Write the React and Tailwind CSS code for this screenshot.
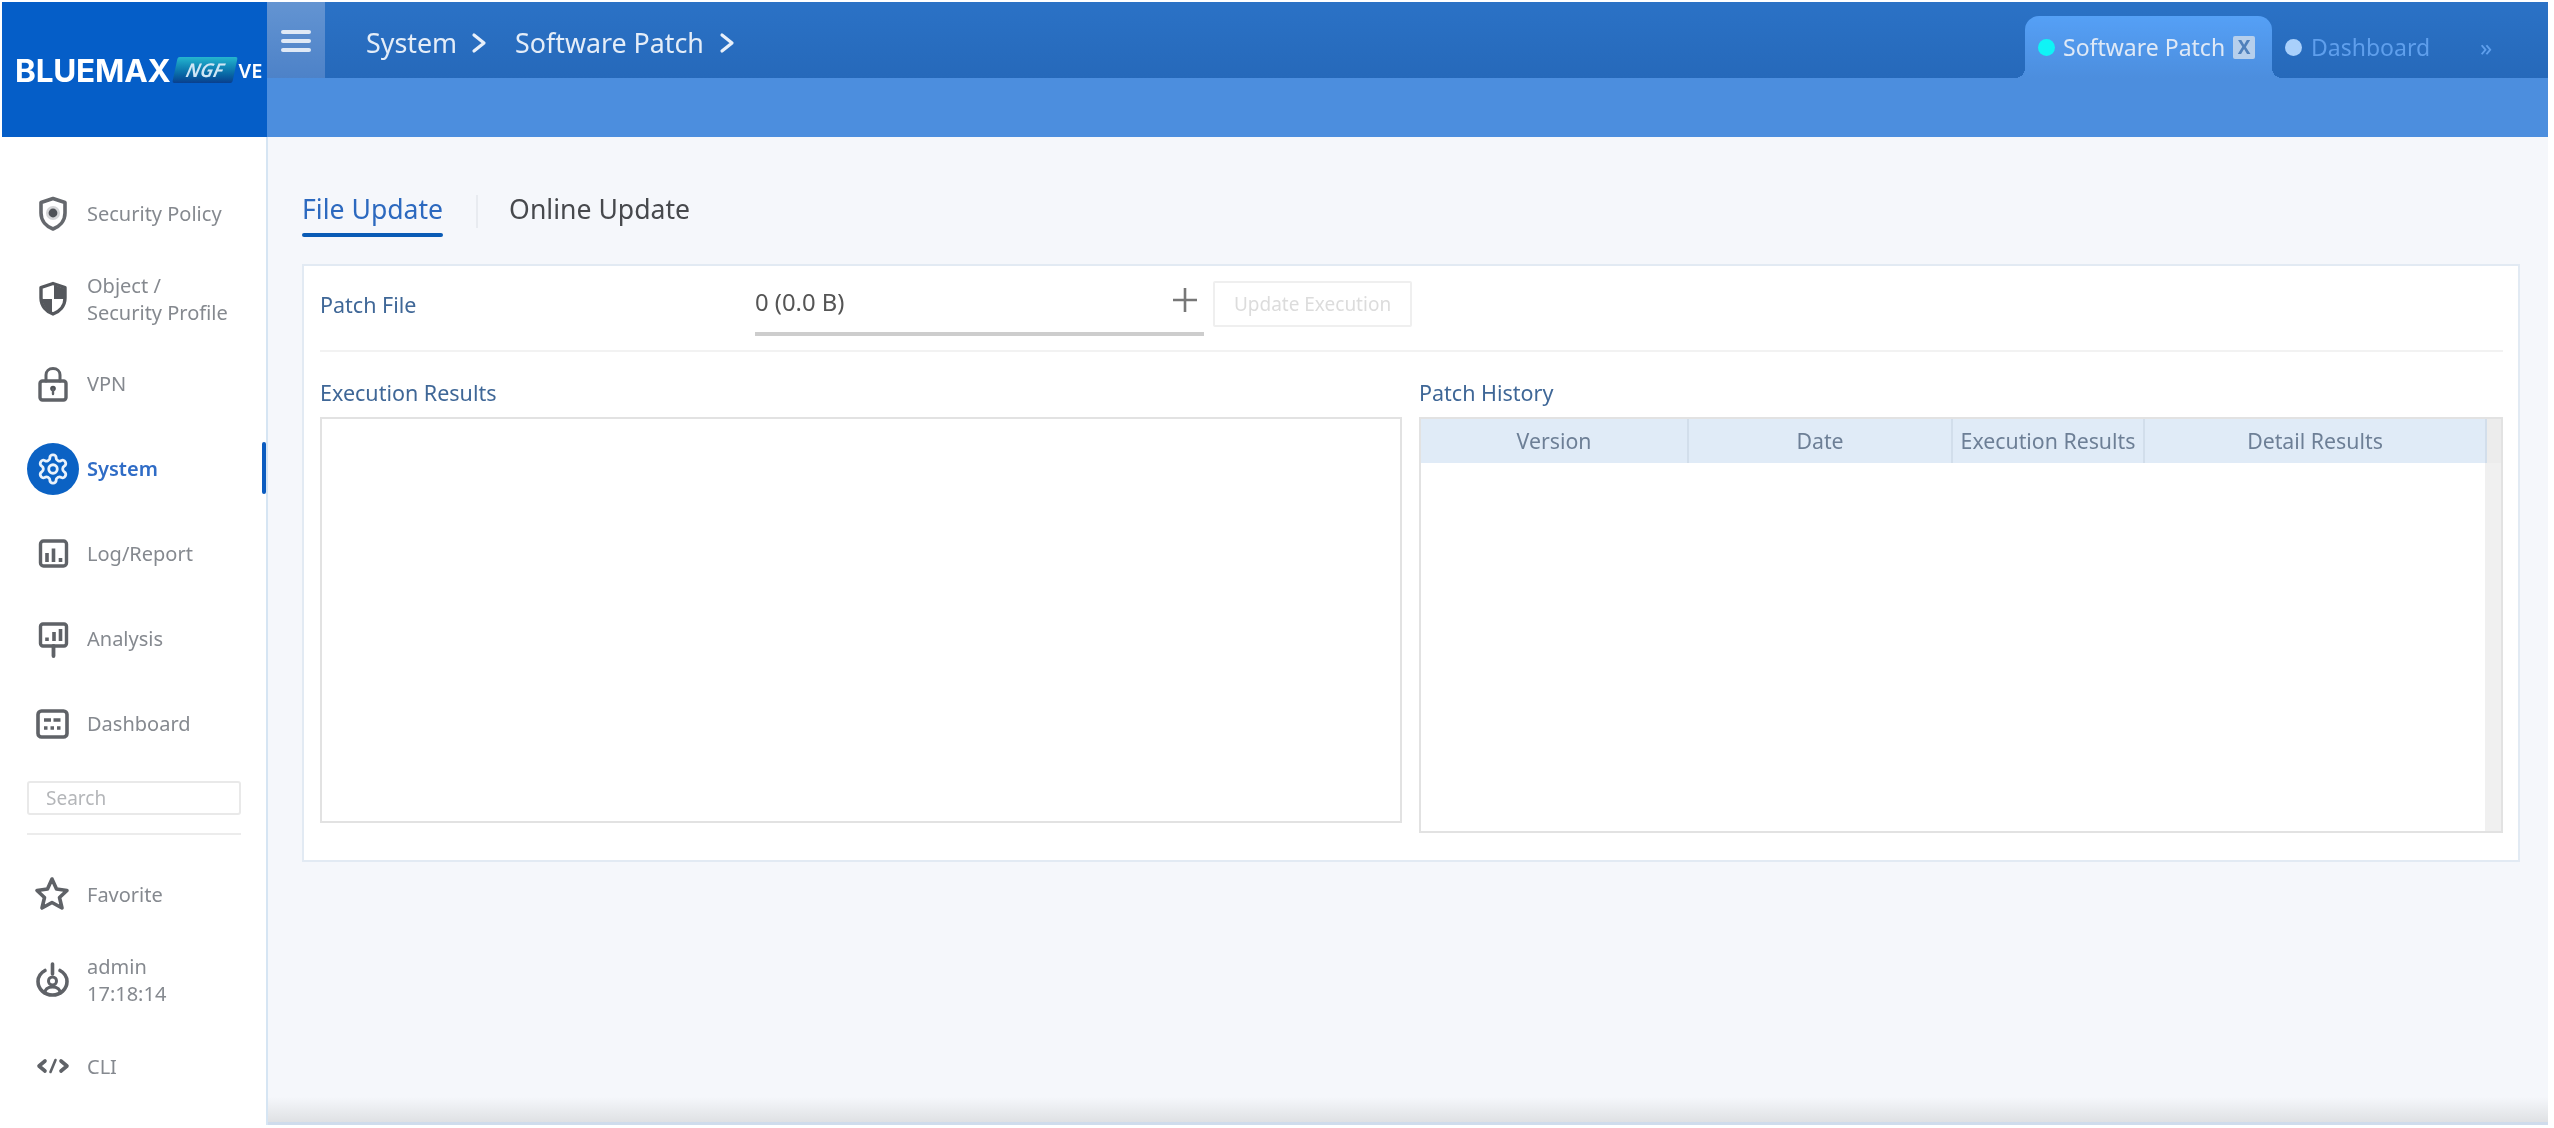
import React from "react";

const Ico = ({ children, w = 34, h = 36 }) => (
  <svg width={w} height={h} viewBox="0 0 34 36" fill="none" stroke="#5f6267" strokeWidth="3" strokeLinecap="round" strokeLinejoin="round" className="overflow-visible">
    {children}
  </svg>
);

const SecurityIcon = () => (
  <Ico>
    <path d="M17 2.5 L29 6.5 V17 C29 25 23.5 30.5 17 33 C10.5 30.5 5 25 5 17 V6.5 Z" strokeWidth="3.6" stroke="#65686d" />
    <circle cx="17" cy="17" r="7" fill="#d4d5d7" stroke="none" />
    <circle cx="17" cy="17" r="4.4" fill="#4f5257" stroke="none" />
  </Ico>
);
const ObjectIcon = () => (
  <Ico>
    <path d="M17 2.5 L29 6.5 V17 C29 25 23.5 30.5 17 33 C10.5 30.5 5 25 5 17 V6.5 Z" fill="#ffffff" strokeWidth="3.4" stroke="#55585d" />
    <path d="M18 4 L28 7.5 V18 H18 Z" fill="#55585d" stroke="none" />
    <path d="M16 18 H6 C7 25 11 29 16 32 Z" fill="#55585d" stroke="none" />
  </Ico>
);
const VpnIcon = () => (
  <Ico>
    <rect x="4" y="15" width="26" height="19" rx="2.5" strokeWidth="3.4" />
    <path d="M10 15 V9 C10 5 13 2.5 17 2.5 C21 2.5 24 5 24 9 V15" strokeWidth="3" />
    <circle cx="17" cy="22.5" r="2.8" fill="#4f5257" stroke="none" />
    <path d="M17 23 V28" strokeWidth="2.4" />
  </Ico>
);
const GearIcon = () => (
  <svg width="34" height="34" viewBox="0 0 24 24" fill="none" stroke="#eaf2fb" strokeWidth="2" strokeLinecap="round" strokeLinejoin="round">
    <path d="M12.22 2h-.44a2 2 0 0 0-2 2v.18a2 2 0 0 1-1 1.73l-.43.25a2 2 0 0 1-2 0l-.15-.08a2 2 0 0 0-2.73.73l-.22.38a2 2 0 0 0 .73 2.73l.15.1a2 2 0 0 1 1 1.72v.51a2 2 0 0 1-1 1.74l-.15.09a2 2 0 0 0-.73 2.73l.22.38a2 2 0 0 0 2.73.73l.15-.08a2 2 0 0 1 2 0l.43.25a2 2 0 0 1 1 1.73V20a2 2 0 0 0 2 2h.44a2 2 0 0 0 2-2v-.18a2 2 0 0 1 1-1.73l.43-.25a2 2 0 0 1 2 0l.15.08a2 2 0 0 0 2.73-.73l.22-.39a2 2 0 0 0-.73-2.73l-.15-.08a2 2 0 0 1-1-1.74v-.5a2 2 0 0 1 1-1.74l.15-.09a2 2 0 0 0 .73-2.73l-.22-.38a2 2 0 0 0-2.73-.73l-.15.08a2 2 0 0 1-2 0l-.43-.25a2 2 0 0 1-1-1.73V4a2 2 0 0 0-2-2z" />
    <circle cx="12" cy="12" r="3" />
  </svg>
);
const LogIcon = () => (
  <Ico>
    <rect x="4.5" y="5" width="26" height="25" rx="3" strokeWidth="3.4" />
    <path d="M11 26 V17 M17.5 26 V12.5 M24.5 26 V22" strokeWidth="3.6" strokeLinecap="butt" />
  </Ico>
);
const AnalysisIcon = () => (
  <Ico>
    <rect x="4.5" y="3" width="26" height="22" rx="2.5" strokeWidth="3.4" />
    <path d="M11 20 V16.5 M18 20 V11 M24.5 20 V8" strokeWidth="3.6" strokeLinecap="butt" />
    <path d="M17.5 25 V35" strokeWidth="3.8" />
  </Ico>
);
const DashIcon = () => (
  <Ico>
    <rect x="2" y="5" width="29" height="26" rx="3.5" strokeWidth="3.6" />
    <path d="M8 14 H25" strokeWidth="3.4" strokeLinecap="butt" strokeDasharray="7 2.5" />
    <path d="M8 22 H25" strokeWidth="3.4" strokeLinecap="butt" strokeDasharray="3.5 3" />
  </Ico>
);
const StarIcon = () => (
  <Ico>
    <path d="M16 3 L20.5 13 L31 14.5 L23.5 21.5 L26 32 L16 26.5 L6 32 L8.5 21.5 L1 14.5 L11.5 13 Z" strokeWidth="3.6" />
  </Ico>
);
const AdminIcon = () => (
  <Ico>
    <path d="M9 8.5 C4.5 11 2 15 2 19.5 C2 27 8.5 33 16.5 33 C24.5 33 31 27 31 19.5 C31 15 28.5 11 24 8.5" strokeWidth="3.6" />
    <path d="M16.5 2 V12" strokeWidth="3.6" />
    <circle cx="16.5" cy="19" r="4" strokeWidth="3" />
    <path d="M9 31 C9 26.5 12 25 16.5 25 C21 25 24 26.5 24 31" strokeWidth="3" />
  </Ico>
);
const CliIcon = () => (
  <Ico>
    <path d="M9 13 L3 18 L9 23" strokeWidth="3.6" />
    <path d="M25 13 L31 18 L25 23" strokeWidth="3.6" />
    <path d="M19.5 12 L14.5 24" strokeWidth="2.6" />
  </Ico>
);

const items = [
  { icon: <SecurityIcon />, label: "Security Policy" },
  { icon: <ObjectIcon />, label: ["Object /", "Security Profile"] },
  { icon: <VpnIcon />, label: "VPN" },
  { icon: <GearIcon />, label: "System", active: true },
  { icon: <LogIcon />, label: "Log/Report" },
  { icon: <AnalysisIcon />, label: "Analysis" },
  { icon: <DashIcon />, label: "Dashboard" },
];

const NavRow = ({ icon, label, active, h = "h-[85px]" }) => (
  <div className={`relative flex items-center pl-[25px] ${h}`}>
    <div className={`flex h-[52px] w-[52px] shrink-0 items-center justify-center rounded-full ${active ? "bg-[#0b62c4]" : ""}`}>{icon}</div>
    <div className={`ml-[8px] text-[20px] leading-[27px] ${active ? "font-semibold text-[#2f6cc6]" : "text-[#85898f]"}`}>
      {Array.isArray(label) ? label.map((l) => <div key={l}>{l}</div>) : label}
    </div>
    {active && <div className="absolute right-0 top-[16px] h-[52px] w-[4px] rounded-sm bg-[#0b5cc0]" />}
  </div>
);

const Sidebar = () => (
  <aside className="flex w-[266px] shrink-0 flex-col border-r-[2px] border-[#d6e5f3] bg-white pt-[34px]">
    {items.map((it, i) => (
      <NavRow key={i} {...it} />
    ))}
    <div className="mx-[25px] mt-[15px] flex h-[34px] items-center rounded-[3px] border-[2px] border-[#e9e9e9] pl-[17px] text-[19px] text-[#b4b6b9]">Search</div>
    <div className="mx-[25px] mt-[18px] h-[2px] bg-[#ececec]" />
    <div className="mt-[16px]">
      <NavRow icon={<StarIcon />} label="Favorite" h="h-[86px]" />
      <NavRow icon={<AdminIcon />} label={["admin", "17:18:14"]} h="h-[86px]" />
      <NavRow icon={<CliIcon />} label="CLI" h="h-[86px]" />
    </div>
  </aside>
);

const Header = () => (
  <header className="flex h-[135px] shrink-0">
    <div className="flex w-[265px] shrink-0 items-start bg-[#055ec8] pl-[13px] pt-[47px] text-white">
      <span className="text-[31.5px] font-bold leading-[44px] tracking-[-0.2px] [font-family:'Inter',sans-serif]">BLUEMAX</span>
      <span className="ml-[4px] mt-[8px] flex h-[26px] w-[60px] shrink-0 -skew-x-12 items-center justify-center rounded-[2px] bg-gradient-to-b from-[#25b6cf] to-[#0a3f8e] text-[19px] font-semibold italic leading-none text-[#cfe6f5]">NGF</span>
      <span className="ml-[4px] text-[20px] font-semibold leading-[44px]">VE</span>
    </div>
    <div className="flex min-w-0 flex-1 flex-col bg-[#4c8ede]">
      <div className="flex h-[76px] items-stretch bg-gradient-to-b from-[#2b72c6] to-[#2669ba]">
        <div className="flex w-[58px] shrink-0 flex-col gap-[5px] bg-gradient-to-b from-[#6394d2] to-[#4d82c8] px-[14px] pt-[28px]">
          <div className="h-[4px] rounded-sm bg-[#dfe9f6]" />
          <div className="h-[4px] rounded-sm bg-[#dfe9f6]" />
          <div className="h-[4px] rounded-sm bg-[#dfe9f6]" />
        </div>
        <div className="ml-[41px] flex items-center pt-[6px] text-[26.8px] text-[#e4edf8]">
          <span>System</span>
          <svg width="18" height="24" viewBox="0 0 18 24" className="ml-[13px]" fill="none" stroke="#e8f0fa" strokeWidth="3.2" strokeLinecap="round" strokeLinejoin="round">
            <path d="M4 4 L14 12 L4 20" />
          </svg>
          <span className="ml-[27px]">Software Patch</span>
          <svg width="18" height="24" viewBox="0 0 18 24" className="ml-[14px]" fill="none" stroke="#e8f0fa" strokeWidth="3.2" strokeLinecap="round" strokeLinejoin="round">
            <path d="M4 4 L14 12 L4 20" />
          </svg>
        </div>
        <div className="ml-auto flex items-stretch pt-[14px]">
          <div className="relative flex w-[247px] items-center rounded-t-[14px] bg-gradient-to-b from-[#55a0f6] to-[#4c8ede] pl-[13px]">
            <div className="absolute -left-[10px] bottom-0 h-[10px] w-[10px] bg-[radial-gradient(circle_at_0_0,transparent_10px,#4c8ede_10px)]" />
            <div className="absolute -right-[10px] bottom-0 h-[10px] w-[10px] bg-[radial-gradient(circle_at_100%_0,transparent_10px,#4c8ede_10px)]" />
            <span className="h-[17px] w-[17px] rounded-full bg-[#0ff4f6]" />
            <span className="ml-[8px] text-[23px] text-[#dfe9f6]">Software Patch</span>
            <span className="ml-[8px] flex h-[23px] w-[22px] items-center justify-center rounded-[2px] bg-[#b6cfec] text-[19px] font-bold leading-none text-[#4f80bb]">X</span>
          </div>
          <div className="flex w-[276px] items-center pl-[13px] text-[23px] text-[#5f9fec]">
            <span className="h-[17px] w-[17px] rounded-full bg-[#a9d0fb]" />
            <span className="ml-[9px]">Dashboard</span>
            <span className="ml-[50px] text-[24px] text-[#5f9fec]">»</span>
          </div>
        </div>
      </div>
    </div>
  </header>
);

const cols = [
  { t: "Version", w: "w-[268px]" },
  { t: "Date", w: "w-[264px]" },
  { t: "Execution Results", w: "w-[192px]" },
  { t: "Detail Results", w: "w-[342px]" },
];

const Main = () => (
  <main className="flex min-w-0 flex-1 flex-col bg-[#f5f7fb] pl-[34px] pr-[25px] pt-[50px]">
    <div className="flex h-[77px] items-start">
      <div className="flex h-[50px] flex-col justify-between">
        <span className="text-[26.6px] leading-[44px] text-[#2c69bf]">File Update</span>
        <span className="h-[4px] rounded-sm bg-[#0a5bb5]" />
      </div>
      <div className="ml-[33px] mt-[8px] h-[33px] w-[2px] bg-[#e8ebf0]" />
      <span className="ml-[31px] text-[26.6px] leading-[44px] text-[#47494d]">Online Update</span>
    </div>
    <section className="mr-[3px] h-[598px] border-[2px] border-[#e2eaf3] bg-white pl-[16px] pr-[15px]">
      <div className="flex h-[86px] items-center border-b-[2px] border-[#f2f2f2] pb-[8px]">
        <span className="w-[435px] pt-[2px] text-[21.5px] text-[#3f6797]">Patch File</span>
        <div className="mt-[2px] flex h-[62px] w-[449px] items-center justify-between border-b-[4px] border-[#cdcdcd] pr-[6px]">
          <span className="text-[23.8px] text-[#555]">0 (0.0 B)</span>
          <svg width="26" height="26" viewBox="0 0 26 26" className="mb-[6px]" fill="none" stroke="#777" strokeWidth="2.6">
            <path d="M13 1 V25 M1 13 H25" />
          </svg>
        </div>
        <div className="ml-[9px] flex h-[46px] w-[199px] items-center justify-center rounded-[2px] border-[2px] border-[#efefef] text-[19px] text-[#dcdcdc]">Update Execution</div>
      </div>
      <div className="flex pt-[25px]">
        <div className="w-[1082px] shrink-0">
          <div className="text-[21.5px] leading-[32px] text-[#3f6797]">Execution Results</div>
          <div className="mt-[8px] h-[406px] border-[2px] border-[#e2e2e2] bg-white" />
        </div>
        <div className="ml-[17px] flex-1">
          <div className="text-[21.5px] leading-[32px] text-[#3f6797]">Patch History</div>
          <div className="mt-[8px] flex h-[416px] flex-col border-[2px] border-[#e2e2e2] bg-white">
            <div className="flex h-[44px] shrink-0 bg-[#e0ebf7]">
              {cols.map((c) => (
                <div key={c.t} className={`${c.w} flex shrink-0 items-center justify-center whitespace-nowrap border-r-[2px] border-[#d2deeb] text-[21.3px] text-[#6d7f96]`}>
                  {c.t}
                </div>
              ))}
              <div className="flex-1 bg-[#ececec]" />
            </div>
            <div className="flex flex-1 justify-end">
              <div className="w-[16px] bg-[#f0f0f0]" />
            </div>
          </div>
        </div>
      </div>
    </section>
  </main>
);

export default function App() {
  return (
    <div className="h-[1128px] w-[2554px] overflow-hidden bg-white pb-[3px] pl-[2px] pr-[6px] pt-[2px] [font-family:'Noto_Sans',sans-serif]">
      <div className="flex h-full flex-col blur-[0.7px]">
        <Header />
        <div className="relative flex min-h-0 flex-1">
          <Sidebar />
          <Main />
          <div className="absolute bottom-0 left-[266px] right-0 h-[28px] border-b-[3px] border-[#cfdcec] bg-gradient-to-b from-[#f5f7fb] to-[#dfe1e4]" />
        </div>
      </div>
    </div>
  );
}
